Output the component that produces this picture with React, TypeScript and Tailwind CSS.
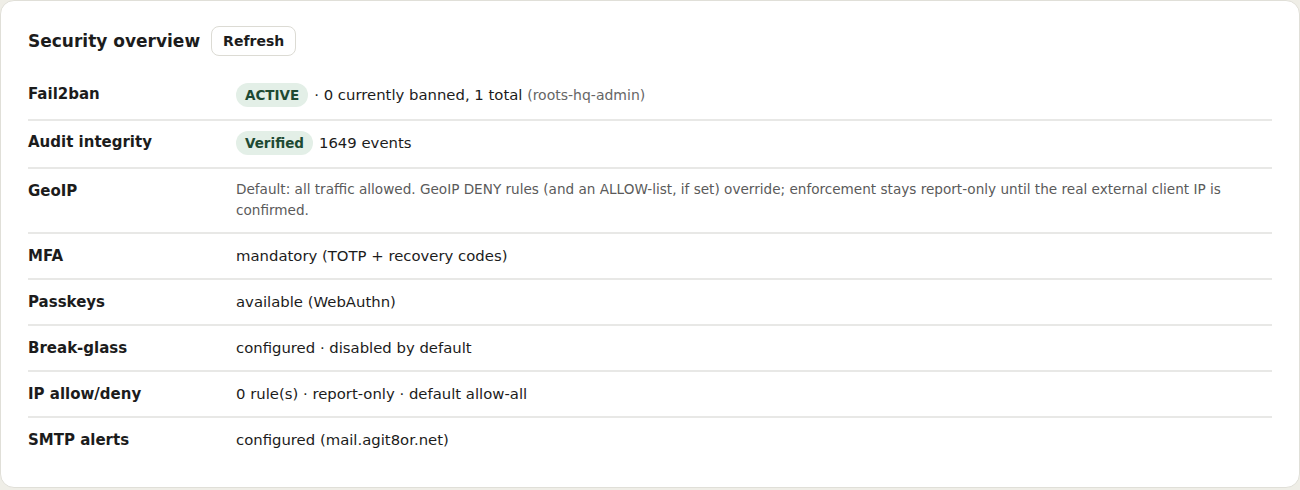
import React from 'react';

// ─── Data ─────────────────────────────────────────────────────────────────────

type Row = { label: string; value: React.ReactNode; tall?: boolean };

const Badge = ({ children }: { children: React.ReactNode }) => (
  <span className="inline-block rounded-full bg-[#e3efe7] text-[#1e4a33] font-bold text-[13.5px] leading-[20px] px-[9px] py-[2px] align-middle">
    {children}
  </span>
);

const ROWS: Row[] = [
  {
    label: 'Fail2ban',
    value: (
      <div className="flex items-center gap-[6px]">
        <Badge>ACTIVE</Badge>
        <span>
          · 0 currently banned, 1 total{' '}
          <span className="text-[14px] text-[#666]">(roots-hq-admin)</span>
        </span>
      </div>
    ),
    tall: true,
  },
  {
    label: 'Audit integrity',
    value: (
      <div className="flex items-center gap-[6px]">
        <Badge>Verified</Badge>
        <span>1649 events</span>
      </div>
    ),
    tall: true,
  },
  {
    label: 'GeoIP',
    value: (
      <p className="text-[13.6px] leading-[21px] text-[#5a5a5a] pb-[1px]">
        Default: all traffic allowed. GeoIP DENY rules (and an ALLOW-list, if set) override; enforcement
        stays report-only until the real external client IP is confirmed.
      </p>
    ),
  },
  { label: 'MFA', value: 'mandatory (TOTP + recovery codes)' },
  { label: 'Passkeys', value: 'available (WebAuthn)' },
  { label: 'Break-glass', value: 'configured · disabled by default' },
  { label: 'IP allow/deny', value: '0 rule(s) · report-only · default allow-all' },
  { label: 'SMTP alerts', value: 'configured (mail.agit8or.net)' },
];

// ─── App ──────────────────────────────────────────────────────────────────────

export default function App() {
  return (
    <div className="min-h-screen bg-[#efeee7] font-['DejaVu_Sans',sans-serif] text-[#1c1c1c]">
      <section className="bg-white border border-[#e0dfd8] rounded-[14px] px-[27px] pt-[25px] pb-[25px]">
        {/* Header */}
        <div className="flex items-center gap-[11px]">
          <h2 className="text-[17px] font-bold leading-[30px]">Security overview</h2>
          <button className="h-[30px] px-[11px] border border-[#dcdbd4] rounded-[8px] text-[14px] font-bold bg-white">
            Refresh
          </button>
        </div>

        {/* Rows */}
        <div className="mt-[17px]">
          {ROWS.map((row, i) => (
            <div
              key={row.label}
              className={`grid grid-cols-[208px_1fr] items-start text-[14.85px] ${
                row.tall ? 'pt-[10px] pb-[12px]' : 'py-[10px]'
              } ${i < ROWS.length - 1 ? 'border-b-2 border-[#e8e8e6]' : ''}`}
            >
              <div className={`font-bold text-[15px] ${row.tall ? 'leading-[22px]' : 'leading-[24px]'}`}>
                {row.label}
              </div>
              <div className="leading-[24px]">{row.value}</div>
            </div>
          ))}
        </div>
      </section>
    </div>
  );
}
